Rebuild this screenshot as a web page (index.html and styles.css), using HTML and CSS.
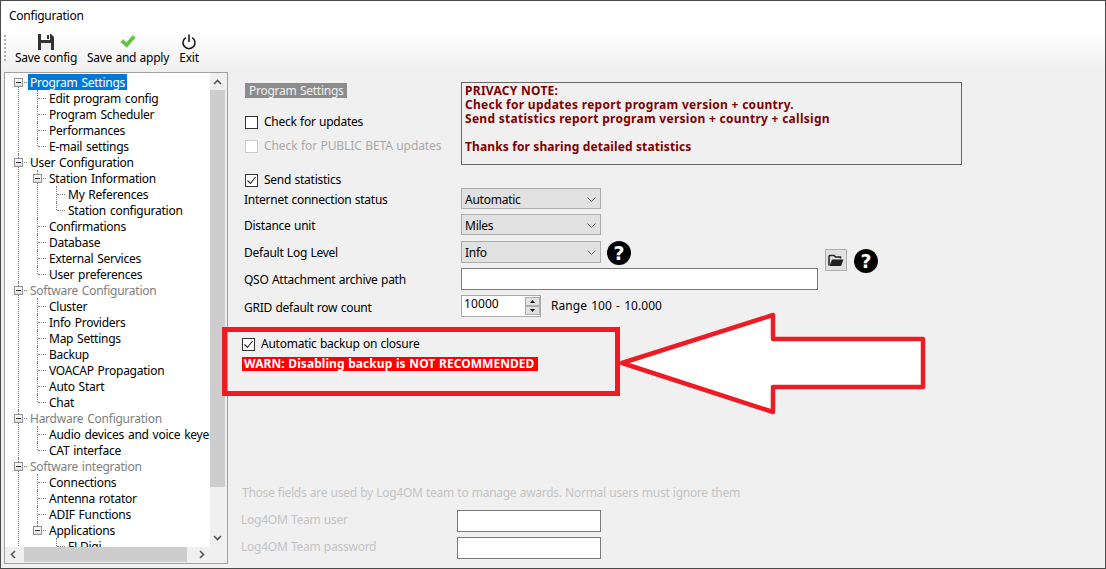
FILE: index.html
```html
<!DOCTYPE html>
<html lang="en">
<head>
<meta charset="utf-8">
<title>Configuration</title>
<link rel="stylesheet" href="styles.css">
</head>
<body>
<div class="screen">
  <div class="window">
    <div class="titlebar">Configuration</div>
    <div class="toolbar">
      <span class="gripper"></span>
      <div class="tool tool-save">
        <svg class="tool-icon" width="16" height="16" viewBox="0 0 16 16"><path d="M0 0H13L16 3V16H0Z" fill="#333"/><rect x="3" y="0" width="9" height="6" fill="#fff"/><rect x="9" y="1" width="2" height="4" fill="#333"/><rect x="3" y="9" width="10" height="7" fill="#eee"/></svg>
        <span>Save config</span>
      </div>
      <div class="tool tool-apply">
        <svg class="tool-icon" width="16" height="16" viewBox="0 0 16 16"><path d="M0.5 8L3 5.5L6.5 8.5L12.5 1.5L15.5 3.5L7 13.5Z" fill="#5fc13f" stroke="#8fd878" stroke-width=".6"/></svg>
        <span>Save and apply</span>
      </div>
      <div class="tool tool-exit">
        <svg class="tool-icon" width="16" height="16" viewBox="0 0 16 16"><path d="M4.8 3.6A6 6 0 1 0 11.2 3.6" fill="none" stroke="#111" stroke-width="1.5"/><path d="M8 0.5V8" fill="none" stroke="#111" stroke-width="1.5"/></svg>
        <span>Exit</span>
      </div>
    </div>
    <div class="main">
      <div class="tree-panel">
        <div class="tree-view">
          <ul class="tree">
            <li><span class="exp"></span><span class="node selected">Program Settings</span>
              <ul>
                <li><span class="node">Edit program config</span></li>
                <li><span class="node">Program Scheduler</span></li>
                <li><span class="node">Performances</span></li>
                <li><span class="node">E-mail settings</span></li>
              </ul>
            </li>
            <li><span class="exp"></span><span class="node">User Configuration</span>
              <ul>
                <li><span class="exp"></span><span class="node">Station Information</span>
                  <ul>
                    <li><span class="node">My References</span></li>
                    <li><span class="node">Station configuration</span></li>
                  </ul>
                </li>
                <li><span class="node">Confirmations</span></li>
                <li><span class="node">Database</span></li>
                <li><span class="node">External Services</span></li>
                <li><span class="node">User preferences</span></li>
              </ul>
            </li>
            <li><span class="exp"></span><span class="node muted">Software Configuration</span>
              <ul>
                <li><span class="node">Cluster</span></li>
                <li><span class="node">Info Providers</span></li>
                <li><span class="node">Map Settings</span></li>
                <li><span class="node">Backup</span></li>
                <li><span class="node">VOACAP Propagation</span></li>
                <li><span class="node">Auto Start</span></li>
                <li><span class="node">Chat</span></li>
              </ul>
            </li>
            <li><span class="exp"></span><span class="node muted">Hardware Configuration</span>
              <ul>
                <li><span class="node">Audio devices and voice keyer</span></li>
                <li><span class="node">CAT interface</span></li>
              </ul>
            </li>
            <li><span class="exp"></span><span class="node muted">Software integration</span>
              <ul>
                <li><span class="node">Connections</span></li>
                <li><span class="node">Antenna rotator</span></li>
                <li><span class="node">ADIF Functions</span></li>
                <li><span class="exp"></span><span class="node">Applications</span>
                  <ul>
                    <li><span class="node">FLDigi</span></li>
                  </ul>
                </li>
              </ul>
            </li>
          </ul>
        </div>
        <div class="vscroll">
          <svg class="chev" width="9" height="6" viewBox="0 0 9 6"><path d="M1 5L4.5 1.5L8 5" fill="none" stroke="#555" stroke-width="1.6"/></svg>
          <div class="vtrack"><div class="vthumb"></div></div>
          <svg class="chev" width="9" height="6" viewBox="0 0 9 6"><path d="M1 1L4.5 4.5L8 1" fill="none" stroke="#555" stroke-width="1.6"/></svg>
        </div>
        <div class="hscroll">
          <svg class="chev" width="6" height="9" viewBox="0 0 6 9"><path d="M5 1L1.5 4.5L5 8" fill="none" stroke="#555" stroke-width="1.6"/></svg>
          <div class="htrack"><div class="hthumb"></div></div>
          <svg class="chev" width="6" height="9" viewBox="0 0 6 9"><path d="M1 1L4.5 4.5L1 8" fill="none" stroke="#555" stroke-width="1.6"/></svg>
        </div>
        <div class="corner"></div>
      </div>
      <div class="content">
        <div class="top">
          <div class="top-left">
            <div class="tag">Program Settings</div>
            <label class="check check-updates"><span class="box"></span>Check for updates</label>
            <label class="check check-beta disabled"><span class="box"></span>Check for PUBLIC BETA updates</label>
          </div>
          <div class="note">
            <div>PRIVACY NOTE:</div>
            <div>Check for updates report program version + country.</div>
            <div>Send statistics report program version + country + callsign</div>
            <div>&nbsp;</div>
            <div class="note-thanks">Thanks for sharing detailed statistics</div>
          </div>
        </div>
        <label class="check check-stats"><span class="box"><svg width="11" height="11" viewBox="0 0 11 11"><path d="M1.500 5.500L4.500 8.500L9.500 2" fill="none" stroke="#222" stroke-width="1.1"/></svg></span>Send statistics</label>
        <div class="form">
          <div class="lbl">Internet connection status</div>
          <div class="cell"><div class="combo"><span>Automatic</span><svg width="9" height="5" viewBox="0 0 9 5"><path d="M.5 .5L4.500 4.500L8.500 .5" fill="none" stroke="#666"/></svg></div></div>
          <div></div>
          <div class="lbl">Distance unit</div>
          <div class="cell"><div class="combo"><span>Miles</span><svg width="9" height="5" viewBox="0 0 9 5"><path d="M.5 .5L4.500 4.500L8.500 .5" fill="none" stroke="#666"/></svg></div></div>
          <div></div>
          <div class="lbl">Default Log Level</div>
          <div class="cell"><div class="combo combo-tall"><span>Info</span><svg width="9" height="5" viewBox="0 0 9 5"><path d="M.5 .5L4.500 4.500L8.500 .5" fill="none" stroke="#666"/></svg></div><span class="help">?</span></div>
          <div class="extras"><span class="folder"><svg width="16" height="13" viewBox="0 0 16 13"><path d="M1 11.500V2.500Q1 1.500 2 1.500H6L7.500 3H12.500V4.500" fill="none" stroke="#222" stroke-width="1.500"/><path d="M1.500 12L4 5.500H15.500L13 12Z" fill="#222"/></svg></span><span class="help">?</span></div>
          <div class="lbl">QSO Attachment archive path</div>
          <div class="cell"><input class="field field-wide" type="text"></div>
          <div></div>
          <div class="lbl lbl-last">GRID default row count</div>
          <div class="cell">
            <div class="spinner"><span class="spin-value">10000</span><span class="spin-btns"><span class="spin-btn"><svg width="5" height="3" viewBox="0 0 5 3"><path d="M2.500 0L5 3H0Z" fill="#111"/></svg></span><span class="spin-btn"><svg width="5" height="3" viewBox="0 0 5 3"><path d="M0 0H5L2.500 3Z" fill="#111"/></svg></span></span></div>
            <span class="range">Range 100 - 10.000</span>
          </div>
          <div></div>
        </div>
        <div class="backup">
          <label class="check"><span class="box"><svg width="11" height="11" viewBox="0 0 11 11"><path d="M1.500 5.500L4.500 8.500L9.500 2" fill="none" stroke="#222" stroke-width="1.1"/></svg></span>Automatic backup on closure</label>
          <div class="warn">WARN: Disabling backup is NOT RECOMMENDED</div>
        </div>
        <div class="team-note">Those fields are used by Log4OM team to manage awards. Normal users must ignore them</div>
        <div class="team">
          <div class="team-lbl">Log4OM Team user</div><input class="field field-team" type="text">
          <div class="team-lbl">Log4OM Team password</div><input class="field field-team" type="password">
        </div>
      </div>
    </div>
  </div>
  <svg class="annotation" width="1106" height="569" viewBox="0 0 1106 569">
    <rect x="224.500" y="329.500" width="393" height="64" fill="none" stroke="#ed1c24" stroke-width="5"/>
    <path d="M622 363L773 315V339H923V387H773V412Z" fill="#fff" stroke="#ed1c24" stroke-width="4.500" stroke-linejoin="round"/>
  </svg>
</div>
</body>
</html>
```
FILE: styles.css
```css
* { box-sizing: border-box; }
html, body { margin: 0; padding: 0; }
body {
  font-family: "Noto Sans", "Liberation Sans", sans-serif;
  font-size: 12px;
  letter-spacing: -0.25px;
  word-spacing: 0.5px;
  color: #000;
  overflow: hidden;
}
.screen { position: relative; width: 1106px; height: 569px; overflow: hidden; }
.window {
  width: 1106px;
  height: 569px;
  border: 1px solid #4a4a4a;
  background: #f0f0f0;
  display: flex;
  flex-direction: column;
}
.titlebar {
  height: 29px;
  background: #fff;
  padding: 7px 0 0 8px;
  line-height: 16px;
}
.toolbar {
  height: 40px;
  background: linear-gradient(#fff, #f0f0f0);
  display: flex;
  align-items: flex-start;
  padding-left: 3px;
}
.gripper {
  width: 2px;
  height: 26px;
  margin-top: 5px;
  border-left: 2px dotted #b0b0b0;
}
.tool { display: flex; flex-direction: column; align-items: center; line-height: 16px; white-space: nowrap; padding-top: 4px; }
.tool-icon { display: block; }
.tool-save { margin-left: 9px; width: 62px; }
.tool-apply { margin-left: 11px; width: 80px; }
.tool-exit { margin-left: 11px; width: 20px; }

.main { flex: 1; display: flex; min-height: 0; }

/* Tree */
.tree-panel {
  width: 224px;
  height: 492px;
  margin: 2px 0 0 3px;
  border: 1px solid #a0a0a0;
  padding: 0 2px 1px 0;
  display: grid;
  grid-template-columns: 205px 15px;
  grid-template-rows: 474px 15px;
}
.tree-view { background: #fff; overflow: hidden; padding-top: 1px; white-space: nowrap; }
ul { list-style: none; margin: 0; padding: 0; }
ul ul { margin-left: 19px; }
li { position: relative; }
.node {
  display: block;
  width: fit-content;
  height: 16px;
  line-height: 18px;
  margin-left: 23px;
  padding: 0 2px;
  position: relative;
  word-spacing: 1px;
}
.selected { background: #0078d7; color: #fff; }
.muted { color: #808080; }
li::before {
  content: "";
  position: absolute;
  left: 13px;
  top: 0;
  bottom: 0;
  border-left: 1px dotted #808080;
}
li:last-child::before { bottom: auto; height: 8px; }
.tree > li:first-child::before { top: 8px; }
.tree > li:last-child::before { bottom: 0; height: auto; }
li::after {
  content: "";
  position: absolute;
  left: 14px;
  top: 8px;
  width: 8px;
  border-top: 1px dotted #808080;
}
.exp {
  position: absolute;
  left: 9px;
  top: 4px;
  width: 9px;
  height: 9px;
  border: 1px solid #919191;
  background: linear-gradient(#fff, #dedede);
  z-index: 1;
}
.exp::after {
  content: "";
  position: absolute;
  left: 1px;
  top: 3px;
  width: 5px;
  height: 1px;
  background: #333;
}
.vscroll { background: #f0f0f0; display: flex; flex-direction: column; align-items: center; }
.vscroll .chev { margin: 6px 0; flex: none; }
.vtrack { flex: 1; width: 100%; }
.vthumb { width: 100%; height: 397px; margin-top: -1px; background: #cdcdcd; }
.hscroll { background: #f0f0f0; display: flex; align-items: center; padding: 0 5px; }
.htrack { flex: 1; height: 100%; padding-left: 8px; }
.hthumb { width: 163px; height: 100%; background: #cdcdcd; }
.corner { background: #f0f0f0; }

/* Right side */
.content { flex: 1; padding: 12px 0 0 14px; min-width: 0; }
.top { display: flex; height: 83px; }
.top-left { width: 219px; display: flex; flex-direction: column; align-items: flex-start; }
.tag {
  margin: 1px 0 0 3px;
  height: 15px;
  line-height: 15px;
  width: 102px;
  padding-left: 4px;
  background: #8c8c8c;
  color: #f0f0f0;
  white-space: nowrap;
}
.check { display: flex; align-items: center; height: 16px; line-height: 16px; white-space: nowrap; }
.box {
  width: 13px;
  height: 13px;
  border: 1px solid #333;
  background: #fff;
  margin-right: 6px;
  flex: none;
  display: block;
}
.box svg { display: block; }
.check-updates { margin: 16px 0 0 3px; }
.check-beta { margin: 8px 0 0 3px; color: #a9a9a9; letter-spacing: -0.1px; }
.disabled .box { border-color: #ccc; }
.note {
  width: 501px;
  height: 83px;
  border: 1px solid #666;
  padding: 1px 3px 0;
  line-height: 14px;
  font-weight: 700;
  letter-spacing: 0.28px;
  word-spacing: 0;
  color: #800000;
  white-space: nowrap;
}
.note-thanks { letter-spacing: 0.12px; }
.check-stats { margin: 7px 0 0 3px; }
.form {
  margin: 0 0 0 2px;
  display: grid;
  grid-template-columns: 217px 357px auto;
  grid-template-rows: 26px 27px 27px 27px 22px;
  align-items: start;
}
.lbl { line-height: 20px; padding-top: 2px; white-space: nowrap; }
.lbl-last { padding-top: 3px; }
.cell { display: flex; align-items: flex-start; }
.combo {
  width: 140px;
  height: 21px;
  background: #e1e1e1;
  border: 1px solid #adadad;
  display: flex;
  align-items: center;
  justify-content: space-between;
  padding: 2px 4px 0 3px;
}
.combo-tall { height: 22px; padding-top: 0; }
.help {
  width: 24px;
  height: 24px;
  border-radius: 50%;
  background: #000;
  color: #fff;
  margin-left: 6px;
  font: 700 19px/24px "DejaVu Sans", sans-serif;
  letter-spacing: 0;
  text-align: center;
  flex: none;
}
.extras { margin: 8px 0 0 7px; display: flex; align-items: flex-start; }
.extras .help { margin: 0 0 0 7px; }
.folder {
  width: 22px;
  height: 22px;
  border: 1px solid #adadad;
  background: #e1e1e1;
  display: flex;
  align-items: center;
  justify-content: center;
}
.field { display: block; background: #fff; border: 1px solid #7a7a7a; padding: 0; margin: 0; outline: 0; border-radius: 0; }
.field-wide { width: 357px; height: 22px; }
.spinner {
  width: 80px;
  height: 22px;
  border: 1px solid #ababab;
  background: #fff;
  display: flex;
  justify-content: space-between;
  padding: 1px 0 1px 2px;
  line-height: 14px;
}
.spin-value { letter-spacing: 0.1px; }
.spin-btns { display: flex; flex-direction: column; width: 15px; }
.spin-btn {
  flex: 1;
  background: #e1e1e1;
  border: 1px solid #adadad;
  display: flex;
  align-items: center;
  justify-content: center;
}
.spin-btn svg { display: block; }
.range { margin: 3px 0 0 10px; line-height: 16px; letter-spacing: 0.05px; word-spacing: 1px; }
.backup { margin: 19px 0 0; height: 149px; }
.warn {
  margin-top: 5px;
  width: 296px;
  height: 14px;
  line-height: 14px;
  padding-left: 2px;
  background: #f00;
  color: #fff;
  font-weight: 700;
  letter-spacing: 0.05px;
  white-space: nowrap;
}
.team-note { color: #c4c4c4; line-height: 16px; white-space: nowrap; letter-spacing: -0.27px; }
.team {
  margin: 9px 0 0 -1px;
  display: grid;
  grid-template-columns: 216px 144px;
  grid-auto-rows: 22px;
  row-gap: 5px;
  align-items: start;
}
.team-lbl { color: #c4c4c4; white-space: nowrap; line-height: 20px; }
.field-team { width: 144px; height: 22px; }
.annotation { position: absolute; left: 0; top: 0; pointer-events: none; }
```
